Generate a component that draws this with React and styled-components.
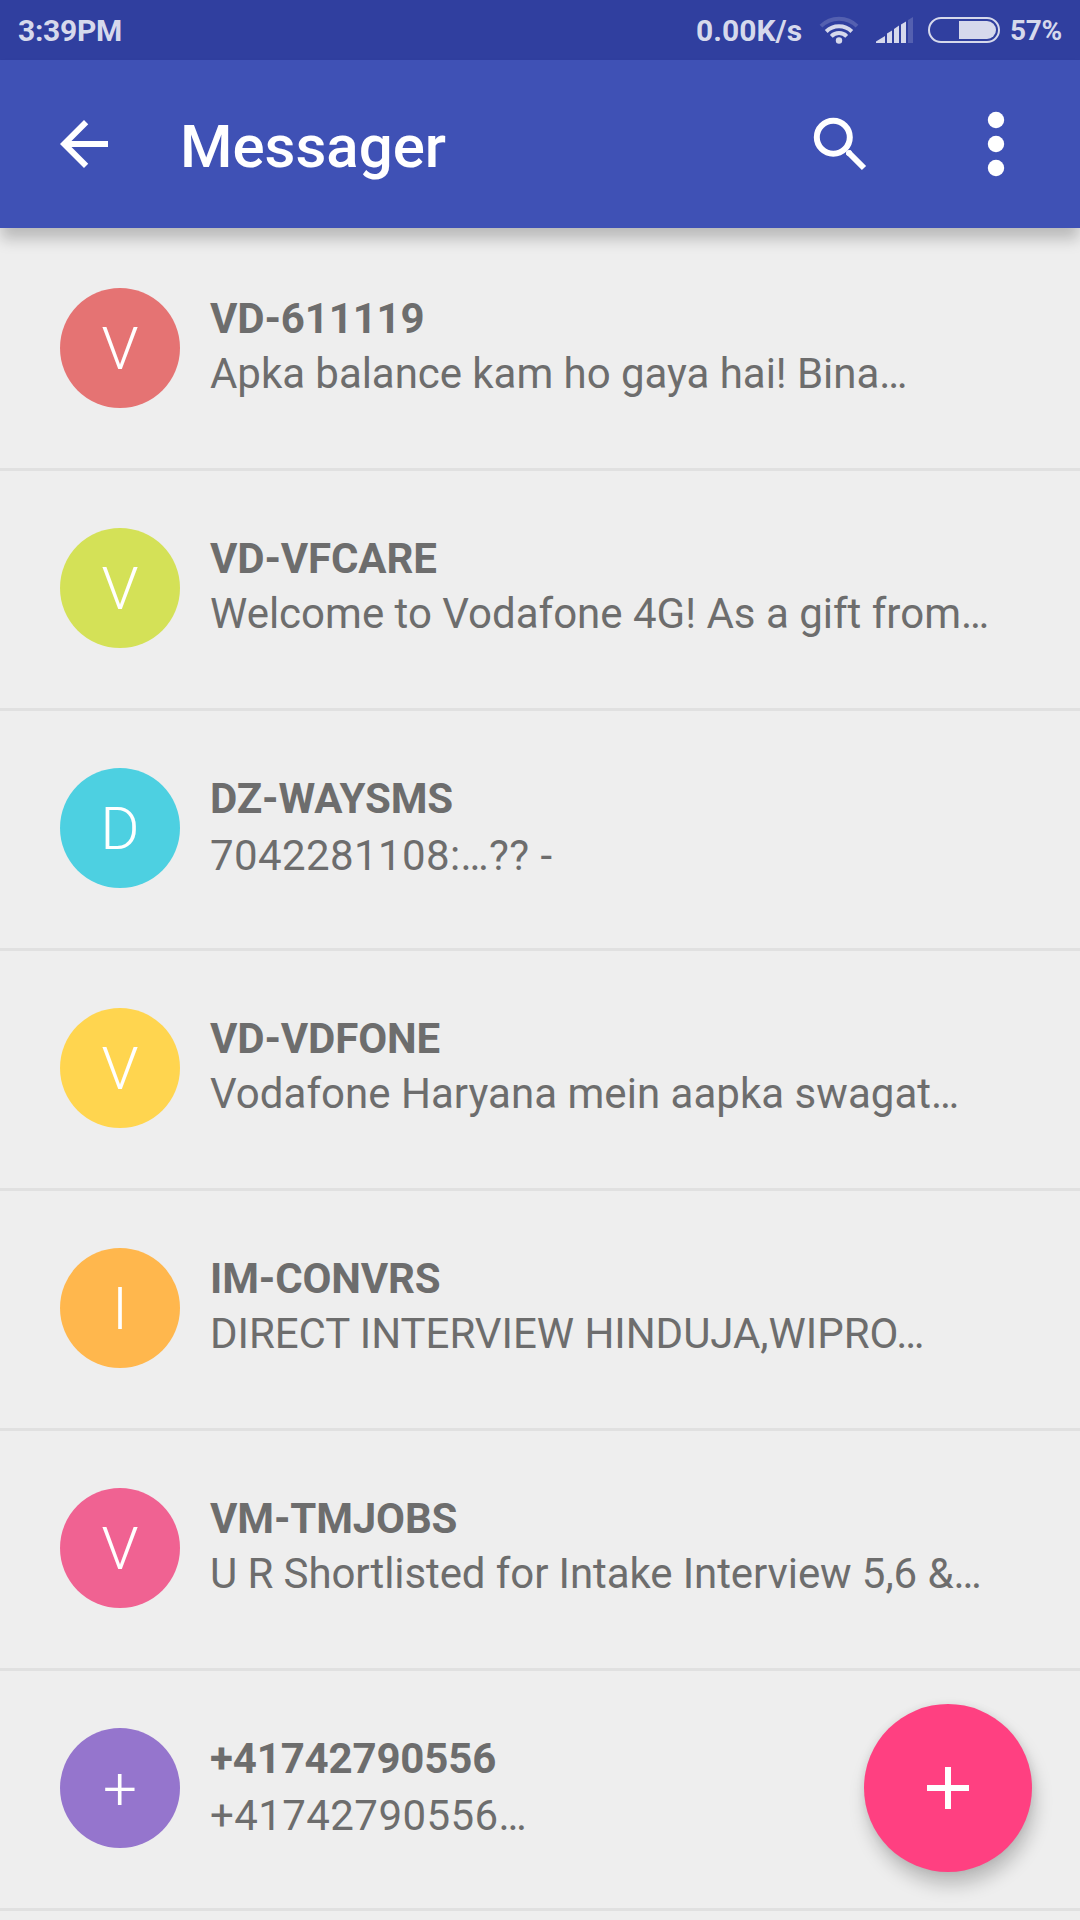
import React from "react";
import styled, { createGlobalStyle } from "styled-components";

const GlobalStyle = createGlobalStyle`
  * { box-sizing: border-box; }
  html, body { margin: 0; padding: 0; }
  body { background: #eeeeee; font-family: Roboto, "Noto Sans", sans-serif; overflow: hidden; }
`;

const Screen = styled.div`
  position: relative;
  display: flex;
  flex-direction: column;
  width: 1080px;
  height: 1920px;
  overflow: hidden;
  background: #eeeeee;
`;

const StatusBar = styled.div`
  flex: none;
  display: flex;
  align-items: center;
  height: 60px;
  padding: 0 18px;
  background: #303f9f;
  color: #d6d9ec;
  font-weight: 700;
  font-size: 30px;
  line-height: 58px;
`;

const Clock = styled.span`
  flex: 1;
  padding-top: 2px;
  letter-spacing: -0.3px;
`;

const NetworkSpeed = styled.span`
  margin-right: 17px;
  padding-top: 2px;
`;

const StatusIcon = styled.svg`
  flex: none;
  display: block;
  margin-right: ${(p) => p.$gap}px;
`;

const BatteryLevel = styled.span`
  padding-top: 2px;
  font-size: 28px;
  letter-spacing: -0.3px;
`;

const AppBar = styled.header`
  flex: none;
  position: relative;
  z-index: 1;
  display: flex;
  align-items: center;
  height: 168px;
  padding: 0 48px;
  background: #3f51b5;
  color: #ffffff;
  box-shadow: 0 12px 14px -1px rgba(0, 0, 0, 0.22);
`;

const IconButton = styled.button`
  flex: none;
  display: flex;
  width: 72px;
  height: 72px;
  padding: 0;
  border: 0;
  background: none;
  color: inherit;
`;

const Title = styled.h1`
  flex: 1;
  margin: 6px 0 0 60px;
  font-size: 60px;
  line-height: 70px;
  font-weight: 500;
`;

const Actions = styled.div`
  display: flex;
  gap: 84px;
`;

const List = styled.ul`
  margin: 0;
  padding: 0;
  list-style: none;
`;

const Row = styled.li`
  display: flex;
  gap: 30px;
  height: 240px;
  padding: 57px 60px 0;
  border-top: 3px solid #e0e0e0;

  &:first-child {
    border-top-color: transparent;
  }
`;

const Avatar = styled.div`
  flex: none;
  width: 120px;
  height: 120px;
  padding-top: 1px;
  border-radius: 50%;
  background: ${(p) => p.$color};
  color: #ffffff;
  font-size: 60px;
  font-weight: 300;
  line-height: 120px;
  text-align: center;
`;

const Message = styled.div`
  display: flex;
  flex-direction: column;
  gap: ${(p) => (p.$loose ? 8 : 6)}px;
  padding-top: 6px;
  color: #6d6d6d;
  font-size: 42px;
  line-height: 49px;
  white-space: pre;
`;

const Sender = styled.span`
  font-weight: 700;
  letter-spacing: -0.15px;
`;

const Preview = styled.span`
  font-weight: 400;
  letter-spacing: ${(p) => p.$tracking}px;
`;

const Fab = styled.button`
  position: absolute;
  right: 48px;
  bottom: 48px;
  z-index: 2;
  display: flex;
  align-items: center;
  justify-content: center;
  width: 168px;
  height: 168px;
  padding: 0;
  border: 0;
  border-radius: 50%;
  background: #ff4081;
  box-shadow: 3px 13px 18px rgba(0, 0, 0, 0.21), 0 0 8px rgba(0, 0, 0, 0.08);
`;

const conversations = [
  { initial: "V", color: "#e57373", sender: "VD-611119", preview: "Apka balance kam ho gaya hai! Bina…", tracking: -0.04 },
  { initial: "V", color: "#d4e157", sender: "VD-VFCARE", preview: "Welcome to Vodafone 4G! As a gift from…", tracking: 0 },
  { initial: "D", color: "#4dd0e1", sender: "DZ-WAYSMS", preview: "7042281108:…?? -", tracking: 0.4, loose: true },
  { initial: "V", color: "#ffd54f", sender: "VD-VDFONE", preview: "Vodafone Haryana mein aapka swagat…", tracking: 0.03 },
  { initial: "I", color: "#ffb74d", sender: "IM-CONVRS", preview: "DIRECT INTERVIEW HINDUJA,WIPRO…", tracking: -0.04 },
  { initial: "V", color: "#f06292", sender: "VM-TMJOBS", preview: "U R Shortlisted for Intake Interview 5,6 &…", tracking: -0.09 },
  { initial: "+", color: "#9575cd", sender: "+41742790556", preview: "+41742790556…", tracking: 0.42, loose: true },
  { initial: "", color: "transparent", sender: "", preview: "", tracking: 0 },
];

function Wifi() {
  return (
    <StatusIcon $gap={17} width="40" height="28" viewBox="0 0 40 28" fill="none" stroke="#d6d9ec" strokeWidth="4">
      <path d="M2 10.200a25.500 25.500 0 0 1 36 0" stroke="#5460b0" />
      <path d="M7.200 15.500a18.400 18.400 0 0 1 25.600 0" />
      <path d="M12.300 20.300a10.900 10.900 0 0 1 15.400 0" />
      <circle cx="20" cy="24.500" r="3.200" fill="#d6d9ec" stroke="none" />
    </StatusIcon>
  );
}

function Signal() {
  return (
    <StatusIcon $gap={15} width="37" height="26" viewBox="0 0 37 26" fill="#d6d9ec">
      <path d="M0 26v-1.500L9 19v7z" />
      <path d="M11 26V16.500l5-3V26z" />
      <path d="M18 26V12l5-3.500V26z" />
      <path d="M25 26V7.500l5-3V26z" />
      <path d="M32 26V3L37 0v26z" fill="#5460b0" />
    </StatusIcon>
  );
}

function Battery() {
  return (
    <StatusIcon $gap={10} width="72" height="26" viewBox="0 0 72 26">
      <rect x="1" y="1" width="70" height="24" rx="12" fill="none" stroke="#d6d9ec" strokeWidth="2" />
      <path d="M31 4h28a9 9 0 0 1 0 18H31z" fill="#d6d9ec" />
    </StatusIcon>
  );
}

function BackArrow() {
  return (
    <svg width="72" height="72" viewBox="0 0 24 24" fill="currentColor">
      <path d="M20 11H7.830l5.590-5.590L12 4l-8 8 8 8 1.410-1.410L7.830 13H20v-2z" />
    </svg>
  );
}

function Search() {
  return (
    <svg width="72" height="72" viewBox="0 0 72 72" fill="none" stroke="currentColor" strokeWidth="6">
      <circle cx="29.300" cy="29.300" r="16.500" />
      <path d="M44 44L60 60" />
      <circle cx="45" cy="45" r="3" fill="currentColor" stroke="none" />
    </svg>
  );
}

function More() {
  return (
    <svg width="72" height="72" viewBox="0 0 72 72" fill="currentColor">
      <circle cx="36" cy="12" r="8.200" />
      <circle cx="36" cy="36" r="8.200" />
      <circle cx="36" cy="60" r="8.200" />
    </svg>
  );
}

export default function App() {
  return (
    <Screen>
      <GlobalStyle />
      <StatusBar>
        <Clock>3:39PM</Clock>
        <NetworkSpeed>0.00K/s</NetworkSpeed>
        <Wifi />
        <Signal />
        <Battery />
        <BatteryLevel>57%</BatteryLevel>
      </StatusBar>
      <AppBar>
        <IconButton aria-label="Back"><BackArrow /></IconButton>
        <Title>Messager</Title>
        <Actions>
          <IconButton aria-label="Search"><Search /></IconButton>
          <IconButton aria-label="More options"><More /></IconButton>
        </Actions>
      </AppBar>
      <List>
        {conversations.map((c, i) => (
          <Row key={i}>
            <Avatar $color={c.color}>{c.initial}</Avatar>
            <Message $loose={c.loose}>
              <Sender>{c.sender}</Sender>
              <Preview $tracking={c.tracking}>{c.preview}</Preview>
            </Message>
          </Row>
        ))}
      </List>
      <Fab aria-label="New message">
        <svg width="42" height="42" viewBox="0 0 42 42" fill="#ffffff">
          <path d="M18 0h6v18h18v6H24v18h-6V24H0v-6h18z" />
        </svg>
      </Fab>
    </Screen>
  );
}
